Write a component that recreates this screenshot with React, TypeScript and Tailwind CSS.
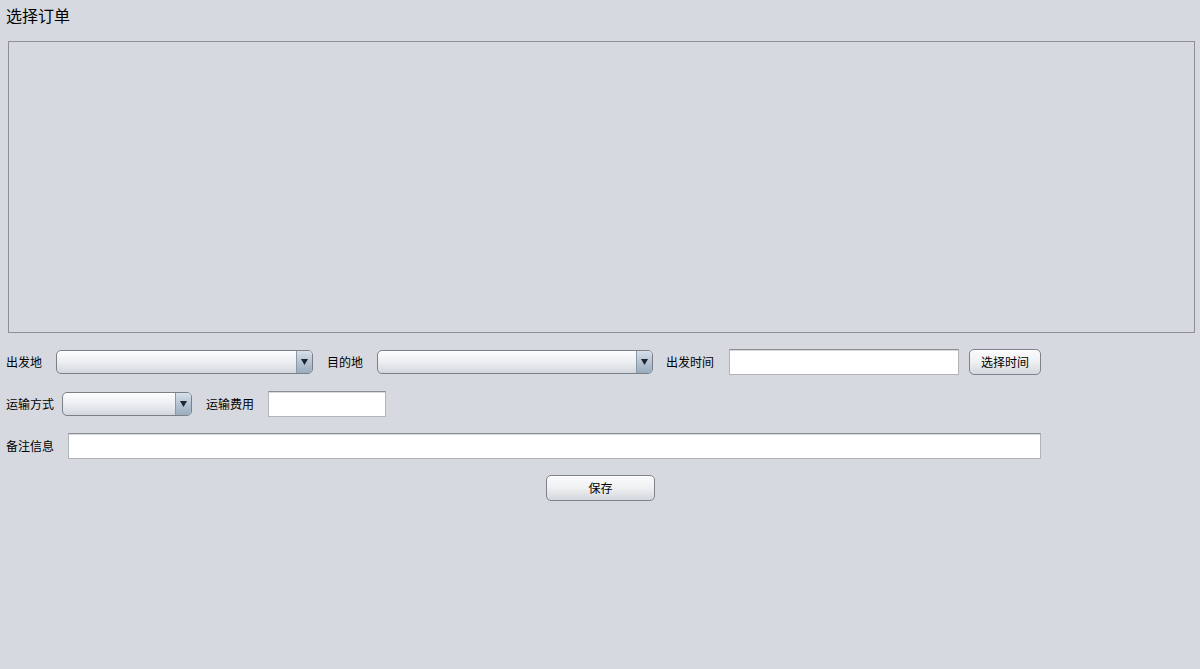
function Combo({ width }: { width: string }) {
  return (
    <div
      className={`${width} h-[24px] flex rounded-[5px] border border-[#7b8088] overflow-hidden bg-gradient-to-b from-[#fdfdfe] via-[#eceef1] to-[#d3d7dd] shadow-[inset_0_1px_0_#ffffff]`}
    >
      <div className="flex-1" />
      <div className="w-[16px] h-full border-l border-[#8a97a6] bg-gradient-to-b from-[#d7e0ea] via-[#b6c4d3] to-[#9aacbf] flex items-center justify-center">
        <svg width="7" height="6" viewBox="0 0 7 6">
          <path d="M0 0 L7 0 L3.5 6 Z" fill="#1f2530" />
        </svg>
      </div>
    </div>
  )
}

function Field({ width }: { width: string }) {
  return (
    <div className={`${width} h-[26px] bg-white border border-[#b2b4b8] border-t-[#8b8e92] shadow-[inset_0_1px_0_#d9dadc]`} />
  )
}

function Btn({ label, width }: { label: string; width: string }) {
  return (
    <button className={`${width} h-[26px] rounded-[5px] border border-[#7e838b] bg-gradient-to-b from-[#fbfbfc] via-[#eef0f2] to-[#d4d7dc] text-[12px] text-black shadow-[inset_0_1px_0_#ffffff]`}>
      {label}
    </button>
  )
}

export default function App() {
  return (
    <div
      className="w-[1200px] h-[669px] bg-[#d6d9df] text-black text-[12px] overflow-hidden"
      style={{ fontFamily: '"Noto Sans CJK SC", "Noto Sans", sans-serif' }}
    >
      <div className="pl-[6px] pt-[4px] h-[41px] text-[16px] leading-[22px]">选择订单</div>

      <div className="ml-[8px] w-[1187px] h-[292px] border border-[#8e9094]" />

      {/* row 1 */}
      <div className="mt-[16px] h-[26px] flex items-center pl-[6px]">
        <span className="w-[36px]">出发地</span>
        <div className="ml-[14px]"><Combo width="w-[257px]" /></div>
        <span className="ml-[14px] w-[36px]">目的地</span>
        <div className="ml-[14px]"><Combo width="w-[276px]" /></div>
        <span className="ml-[13px] w-[48px]">出发时间</span>
        <div className="ml-[15px]"><Field width="w-[230px]" /></div>
        <div className="ml-[10px]"><Btn label="选择时间" width="w-[72px]" /></div>
      </div>

      {/* row 2 */}
      <div className="mt-[16px] h-[26px] flex items-center pl-[6px]">
        <span className="w-[48px]">运输方式</span>
        <div className="ml-[8px]"><Combo width="w-[130px]" /></div>
        <span className="ml-[14px] w-[48px]">运输费用</span>
        <div className="ml-[14px]"><Field width="w-[118px]" /></div>
      </div>

      {/* row 3 */}
      <div className="mt-[16px] h-[26px] flex items-center pl-[6px]">
        <span className="w-[48px]">备注信息</span>
        <div className="ml-[14px]"><Field width="w-[973px]" /></div>
      </div>

      <div className="mt-[16px] pl-[546px]">
        <Btn label="保存" width="w-[109px]" />
      </div>
    </div>
  )
}
